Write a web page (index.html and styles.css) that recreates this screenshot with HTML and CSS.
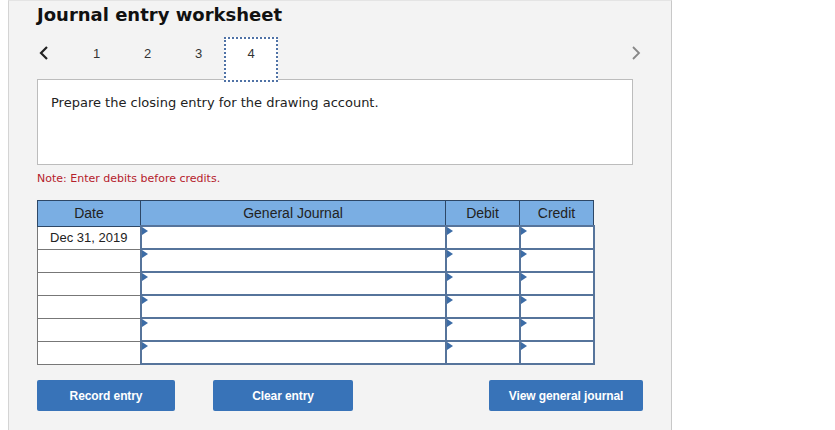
FILE: index.html
```html
<!DOCTYPE html>
<html>
<head>
<meta charset="utf-8">
<link rel="stylesheet" href="styles.css">
</head>
<body>
<div class="panel">
  <h1 class="title">Journal entry worksheet</h1>
  <div class="nav">
    <svg class="chev-left" width="12" height="16" viewBox="0 0 12 16"><polyline points="9,2 3,8 9,14" fill="none" stroke="#222" stroke-width="2.2"/></svg>
    <div class="tabs">
      <div class="tab">1</div>
      <div class="tab">2</div>
      <div class="tab">3</div>
      <div class="tab active">4</div>
    </div>
    <svg class="chev-right" width="12" height="16" viewBox="0 0 12 16"><polyline points="3,2 9,8 3,14" fill="none" stroke="#888" stroke-width="1.8"/></svg>
  </div>
  <div class="prompt">Prepare the closing entry for the drawing account.</div>
  <div class="note">Note: Enter debits before credits.</div>
  <table class="journal">
    <thead>
      <tr><th class="c-date">Date</th><th class="c-gj">General Journal</th><th class="c-dr">Debit</th><th class="c-cr">Credit</th></tr>
    </thead>
    <tbody>
      <tr><td class="date">Dec 31, 2019</td><td class="in"></td><td class="in"></td><td class="in"></td></tr>
      <tr><td class="date"></td><td class="in"></td><td class="in"></td><td class="in"></td></tr>
      <tr><td class="date"></td><td class="in"></td><td class="in"></td><td class="in"></td></tr>
      <tr><td class="date"></td><td class="in"></td><td class="in"></td><td class="in"></td></tr>
      <tr><td class="date"></td><td class="in"></td><td class="in"></td><td class="in"></td></tr>
      <tr><td class="date"></td><td class="in"></td><td class="in"></td><td class="in"></td></tr>
    </tbody>
  </table>
  <div class="buttons">
    <button class="btn b-record">Record entry</button>
    <button class="btn b-clear">Clear entry</button>
    <button class="btn b-view">View general journal</button>
  </div>
</div>
</body>
</html>
```
FILE: styles.css
```css
html, body { margin: 0; padding: 0; background: #fff; }
body { width: 835px; height: 430px; overflow: hidden; }
.panel {
  margin-left: 8px;
  width: 664px;
  height: 430px;
  box-sizing: border-box;
  border-left: 1px solid #d4d4d4;
  border-right: 1px solid #c8c8c8;
  border-top: 1px solid #e4e4e4;
  background: #f3f3f3;
  padding-left: 28px;
  font-family: "DejaVu Sans", Verdana, sans-serif;
}
.title {
  margin: 0;
  padding-top: 3px;
  font-size: 18px;
  line-height: 22px;
  font-weight: bold;
  color: #111;
}
.nav {
  margin-top: 11px;
  height: 45px;
  display: flex;
  align-items: flex-start;
  width: 605px;
}
.chev-left { margin-top: 8px; margin-left: 1px; }
.chev-right { margin-top: 8px; margin-left: auto; }
.tabs { display: flex; margin-left: 21px; }
.tab {
  width: 51px;
  height: 32px;
  line-height: 34px;
  text-align: center;
  font-family: "Liberation Sans", Arial, sans-serif;
  font-size: 13px;
  color: #333;
}
.tab.active {
  position: relative;
  z-index: 1;
  width: 50px;
  height: 41px;
  line-height: 30px;
  background: #fff;
  border: 2px dotted #4f72a6;
}
.prompt {
  margin-top: -3px;
  width: 596px;
  height: 86px;
  box-sizing: border-box;
  background: #fff;
  border: 1px solid #bcbcbc;
  padding: 15px 0 0 13px;
  font-size: 13px;
  line-height: 16px;
  color: #222;
}
.note {
  margin-top: 7px;
  font-size: 11px;
  line-height: 14px;
  color: #b5212b;
}
.journal {
  margin-top: 14px;
  border-collapse: collapse;
  font-family: "Liberation Sans", Arial, sans-serif;
  font-size: 13px;
  color: #222;
}
.journal th {
  background: #7aaee3;
  border: 1px solid #2d4766;
  font-weight: normal;
  font-size: 14px;
  height: 24px;
  padding: 0;
  text-align: center;
}
.c-date { width: 102px; }
.c-gj { width: 304px; }
.c-dr { width: 73px; }
.c-cr { width: 73px; }
.journal td {
  height: 20px;
  padding: 0;
  background: #fff;
}
.journal td.date {
  border: 1px solid #777;
  text-align: center;
  height: 22px;
}
.journal td.in {
  position: relative;
  border: 2px solid #56749b;
}
.journal td.in::before {
  content: "";
  position: absolute;
  left: 0;
  top: 0;
  border-top: 4px solid transparent;
  border-bottom: 4px solid transparent;
  border-left: 6px solid #3c6ca6;
}
.buttons {
  margin-top: 15px;
  display: flex;
}
.btn {
  height: 31px;
  border: none;
  border-radius: 2px;
  background: #3873b8;
  color: #fff;
  font-family: "Liberation Sans", Arial, sans-serif;
  font-weight: bold;
  font-size: 12px;
  letter-spacing: -0.1px;
  padding: 0;
}
.b-record { width: 138px; }
.b-clear { width: 140px; margin-left: 38px; }
.b-view { width: 154px; margin-left: 136px; }
```
